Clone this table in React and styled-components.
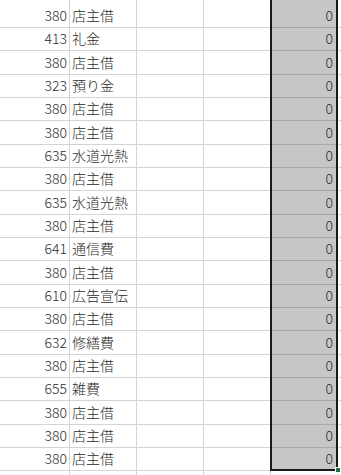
import React from "react";
import styled, { createGlobalStyle } from "styled-components";

const Global = createGlobalStyle`
  html, body { margin: 0; padding: 0; background: #fff; overflow: hidden; }
  body { font-family: "Noto Sans CJK JP", "Noto Sans", sans-serif; }
`;

const rows = [
  [380, "店主借"], [413, "礼金"], [380, "店主借"], [323, "預り金"], [380, "店主借"],
  [380, "店主借"], [635, "水道光熱"], [380, "店主借"], [635, "水道光熱"], [380, "店主借"],
  [641, "通信費"], [380, "店主借"], [610, "広告宣伝"], [380, "店主借"], [632, "修繕費"],
  [380, "店主借"], [655, "雑費"], [380, "店主借"], [380, "店主借"], [380, "店主借"],
];

const heights = [5, ...rows.map((_, i) => (i % 3 === 2 ? 24 : 23)), 10];

const Sheet = styled.div`
  position: relative;
  width: 341px;
  height: 475px;
  overflow: hidden;
  display: grid;
  grid-template-columns: 2px 68px 67px 67px 67px 67px 10px;
  grid-template-rows: ${heights.map((h) => h + "px").join(" ")};
`;

const Cell = styled.div`
  box-sizing: border-box;
  border-right: 1px solid #d4d4d4;
  border-bottom: 1px solid ${(p) => (p.$sel ? "#a9a9a9" : "#d4d4d4")};
  background: ${(p) => (p.$sel ? "#c6c6c6" : "#fff")};
  display: flex;
  align-items: flex-end;
  justify-content: ${(p) => (p.$right ? "flex-end" : "flex-start")};
  padding: 0 ${(p) => (p.$right ? "2px" : "0")} 5px ${(p) => (p.$right ? "0" : "2px")};
  font-size: 14px;
  font-weight: 300;
  line-height: 1;
  color: #2b2b2b;
  white-space: nowrap;
  overflow: hidden;
`;

const Selection = styled.div`
  position: absolute;
  left: 270px;
  top: -10px;
  width: 68px;
  height: 481px;
  box-sizing: border-box;
  border: 2px solid #1a1a1a;
  pointer-events: none;
`;

const Handle = styled.div`
  position: absolute;
  left: 335px;
  top: 467px;
  width: 6px;
  height: 6px;
  box-sizing: border-box;
  background: #217346;
  border: 1px solid #fff;
`;

export default function App() {
  const all = [[null, null], ...rows, [null, null]];
  return (
    <>
      <Global />
      <Sheet>
        {all.map(([num, label], i) => (
          <React.Fragment key={i}>
            <Cell />
            <Cell $right>{num}</Cell>
            <Cell>{label}</Cell>
            <Cell />
            <Cell />
            <Cell $sel={i < all.length - 1} $right style={{ paddingRight: 4 }}>
              {num !== null ? 0 : null}
            </Cell>
            <Cell />
          </React.Fragment>
        ))}
        <Selection />
        <Handle />
      </Sheet>
    </>
  );
}
